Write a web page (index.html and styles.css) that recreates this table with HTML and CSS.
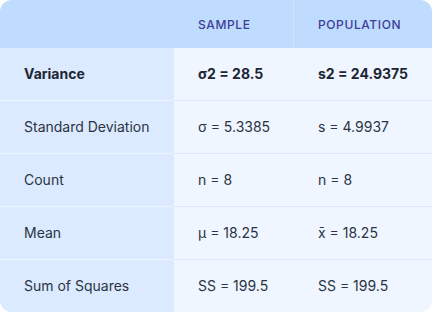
FILE: index.html
```html
<!DOCTYPE html>
<html lang="en">
<head>
<meta charset="utf-8">
<link rel="stylesheet" href="styles.css">
</head>
<body>
<div class="card">
  <table class="stats">
    <colgroup>
      <col class="c1">
      <col class="c2">
      <col class="c3">
    </colgroup>
    <thead>
      <tr>
        <th class="h h-first"></th>
        <th class="h h-mid">Sample</th>
        <th class="h">Population</th>
      </tr>
    </thead>
    <tbody>
      <tr class="strong">
        <td class="label">Variance</td>
        <td class="val">σ2 = 28.5</td>
        <td class="val">s2 = 24.9375</td>
      </tr>
      <tr>
        <td class="label">Standard Deviation</td>
        <td class="val">σ = 5.3385</td>
        <td class="val">s = 4.9937</td>
      </tr>
      <tr>
        <td class="label">Count</td>
        <td class="val">n = 8</td>
        <td class="val">n = 8</td>
      </tr>
      <tr>
        <td class="label">Mean</td>
        <td class="val">μ = 18.25</td>
        <td class="val">x̄ = 18.25</td>
      </tr>
      <tr class="last">
        <td class="label">Sum of Squares</td>
        <td class="val">SS = 199.5</td>
        <td class="val">SS = 199.5</td>
      </tr>
    </tbody>
  </table>
</div>
</body>
</html>
```

FILE: styles.css
```css
html, body {
  margin: 0;
  padding: 0;
  background: #ffffff;
}
body {
  font-family: Inter, "Noto Sans", sans-serif;
  width: 432px;
  height: 312px;
  overflow: hidden;
}
.card {
  width: 432px;
  height: 312px;
  border-radius: 12px;
  overflow: hidden;
  background: #eff6ff;
}
.stats {
  width: 432px;
  border-collapse: separate;
  border-spacing: 0;
  table-layout: fixed;
}
.c1 { width: 174px; }
.c2 { width: 120px; }
.c3 { width: 138px; }
.h {
  height: 48px;
  padding: 0 24px;
  box-sizing: border-box;
  background: #bfdbfe;
  color: #3e3d98;
  font-size: 12px;
  font-weight: 500;
  letter-spacing: 0.05em;
  text-transform: uppercase;
  text-align: left;
  vertical-align: middle;
}
.h-mid {
  border-right: 1px solid #d3e5fd;
}
td {
  padding: 18px 24px 18px 24px;
  line-height: 16px;
  font-size: 14px;
  text-align: left;
  vertical-align: middle;
  white-space: nowrap;
  color: #2b3444;
}
.label {
  background: #dbeafe;
  border-bottom: 1px solid #eef5ff;
}
.val {
  background: #eff6ff;
  border-bottom: 1px solid #dbe9fd;
}
.last td {
  border-bottom: none;
}
.strong td {
  font-weight: 700;
  color: #1e2533;
}
```
